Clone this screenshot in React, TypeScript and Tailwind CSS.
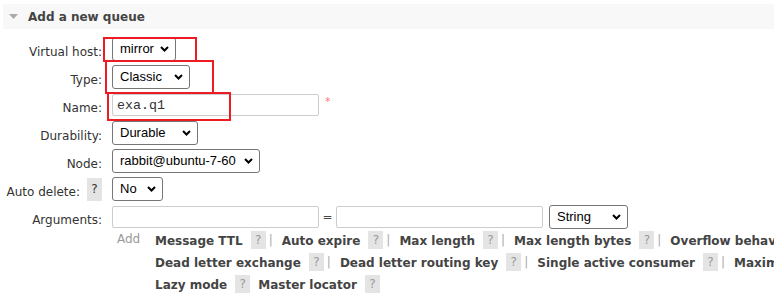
import React from "react";

const Chevron = () => (
  <svg
    width="9"
    height="6"
    viewBox="0 0 9 6"
    className="pointer-events-none absolute right-[7px] top-1/2 -translate-y-1/2"
  >
    <path d="M1 1 L4.5 4.5 L8 1" fill="none" stroke="#000" strokeWidth="2" />
  </svg>
);

function Select({ value, width }: { value: string; width: string }) {
  return (
    <span className={`relative inline-block ${width}`}>
      <select
        defaultValue={value}
        className="w-full h-[24px] appearance-none rounded-[3px] border border-[#767676] bg-white pl-[7px] pr-[18px] font-['Liberation_Sans',Arial,sans-serif] text-[13px] text-black outline-none"
      >
        <option>{value}</option>
      </select>
      <Chevron />
    </span>
  );
}

function Help({ dark }: { dark?: boolean }) {
  return (
    <span
      className={`inline-flex items-center justify-center bg-[#e4e4e4] font-normal ${
        dark ? "w-[15px] h-[23px] text-[#333]" : "w-[15px] h-[18px] text-[#999]"
      }`}
    >
      ?
    </span>
  );
}

function Row({ label, children }: { label: React.ReactNode; children: React.ReactNode }) {
  return (
    <div className="flex h-[28px] items-center">
      <div className="flex w-[103px] items-center justify-end pr-[1px] text-[#333]">{label}</div>
      <div className="ml-[9px] flex items-center">{children}</div>
    </div>
  );
}

const Label = ({ children }: { children: React.ReactNode }) => (
  <span className="pt-[6px]">{children}</span>
);

type Arg = { name: string; sep?: boolean };

const argRows: Arg[][] = [
  [
    { name: "Message TTL", sep: true },
    { name: "Auto expire", sep: true },
    { name: "Max length", sep: true },
    { name: "Max length bytes", sep: true },
    { name: "Overflow behaviour", sep: true },
  ],
  [
    { name: "Dead letter exchange", sep: true },
    { name: "Dead letter routing key", sep: true },
    { name: "Single active consumer", sep: true },
    { name: "Maximum priority", sep: true },
  ],
  [{ name: "Lazy mode" }, { name: "Master locator" }],
];

export default function App() {
  return (
    <div className="relative h-[302px] w-[774px] overflow-hidden bg-white font-['DejaVu_Sans',Verdana,sans-serif] text-[12px] text-[#484848]">
      {/* section header */}
      <div className="ml-[3px] mt-[4px] flex h-[25px] items-center bg-[#f8f8f8]">
        <svg width="9" height="5" viewBox="0 0 9 5" className="ml-[6px]">
          <path d="M0 0 H9 L4.5 5 Z" fill="#aaa" />
        </svg>
        <span className="ml-[10px] font-bold text-[#444]">Add a new queue</span>
      </div>

      <div className="mt-[6px]">
        <Row label={<Label>Virtual host:</Label>}>
          <Select value="mirror" width="w-[64px]" />
        </Row>
        <Row label={<Label>Type:</Label>}>
          <Select value="Classic" width="w-[78px]" />
        </Row>
        <Row label={<Label>Name:</Label>}>
          <input
            defaultValue="exa.q1"
            className="h-[22px] w-[207px] rounded-[2px] border border-[#ccc] px-[4px] font-['Liberation_Mono','Courier_New',monospace] text-[13.33px] text-[#333] outline-none"
          />
          <span className="ml-[6px] -mt-[6px] text-[11px] text-[#f77]">*</span>
        </Row>
        <Row label={<Label>Durability:</Label>}>
          <Select value="Durable" width="w-[86px]" />
        </Row>
        <Row label={<Label>Node:</Label>}>
          <Select value="rabbit@ubuntu-7-60" width="w-[148px]" />
        </Row>
        <Row
          label={
            <>
              <Label>Auto delete:</Label>
              <span className="ml-[7px] flex">
                <Help dark />
              </span>
            </>
          }
        >
          <Select value="No" width="w-[51px]" />
        </Row>
        <Row label={<Label>Arguments:</Label>}>
          <input className="h-[22px] w-[207px] rounded-[2px] border border-[#ccc] outline-none" />
          <span className="w-[17px] text-center">=</span>
          <input className="h-[22px] w-[207px] rounded-[2px] border border-[#ccc] outline-none" />
          <span className="ml-[6px]">
            <Select value="String" width="w-[79px]" />
          </span>
        </Row>

        <div className="-mt-[2px] flex">
          <div className="w-[112px] shrink-0" />
          <div className="w-[43px] shrink-0 pl-[5px] pt-[1px] text-[#999]">Add</div>
          <div className="flex flex-col">
            {argRows.map((row, i) => (
              <div key={i} className="flex h-[22px] items-center whitespace-nowrap font-bold text-[#444]">
                {row.map((a, j) => (
                  <span key={a.name} className={`flex items-center ${j > 0 && !row[j - 1].sep ? "ml-[8px]" : ""}`}>
                    <span className="pt-[1px]">{a.name}</span>
                    <span className="ml-[8px]">
                      <Help />
                    </span>
                    {a.sep && (
                      <span className="ml-[3px] mr-[9px] font-normal text-[#aaa]">|</span>
                    )}
                  </span>
                ))}
              </div>
            ))}
          </div>
        </div>
      </div>

      {/* red annotation frames */}
      <div className="pointer-events-none absolute left-[103px] top-[37px] h-[25px] w-[94px] border-2 border-[#ed1c24]" />
      <div className="pointer-events-none absolute left-[105px] top-[60px] h-[34px] w-[109px] border-2 border-[#ed1c24]" />
      <div className="pointer-events-none absolute left-[107px] top-[92px] h-[29px] w-[124px] border-2 border-[#ed1c24]" />
    </div>
  );
}
